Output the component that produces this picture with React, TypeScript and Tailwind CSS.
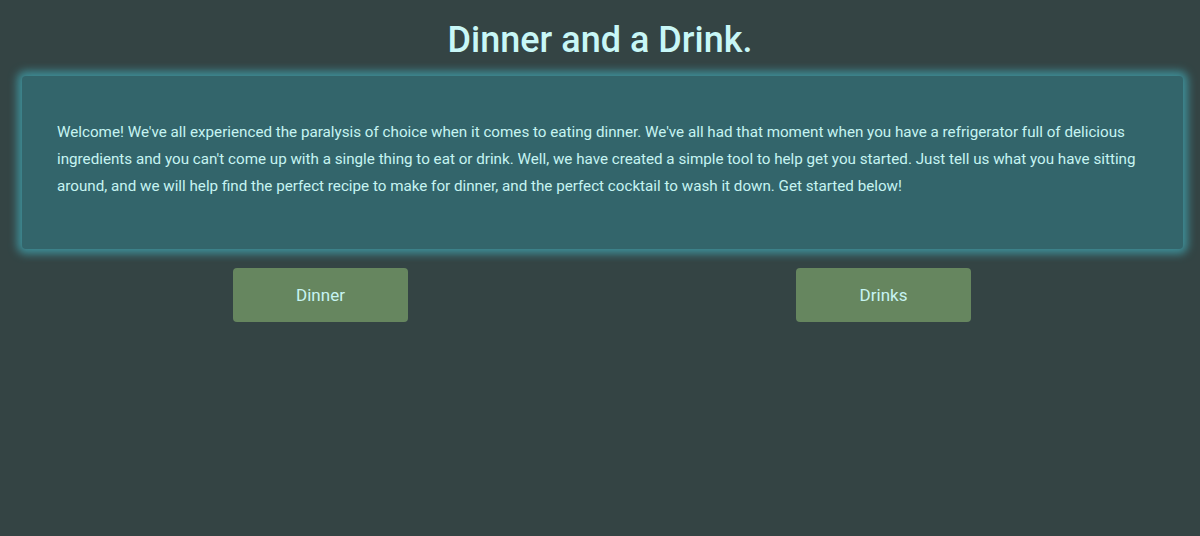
import React from 'react';

const intro =
  "Welcome! We've all experienced the paralysis of choice when it comes to eating dinner. We've all had that moment when you have a refrigerator full of delicious ingredients and you can't come up with a single thing to eat or drink. Well, we have created a simple tool to help get you started. Just tell us what you have sitting around, and we will help find the perfect recipe to make for dinner, and the perfect cocktail to wash it down. Get started below!";

const App: React.FC = () => {
  return (
    <div className="min-h-[536px] bg-[#344444] pt-[14px] font-['Roboto',sans-serif] text-[#c6f4f2]">
      <h1 className="text-center text-[36px] leading-[52px] font-medium text-[#c8f7f7]">
        Dinner and a Drink.
      </h1>

      {/* Intro card */}
      <div className="ml-[22px] mt-[10px] w-[1161px] rounded-[4px] bg-[#33656b] pl-[35px] pr-[30px] pt-[43px] pb-[49px] shadow-[0_0_8px_5px_#3e8c95]">
        <p className="text-[15.2px] leading-[27px]">{intro}</p>
      </div>

      {/* Buttons */}
      <div className="ml-[39px] mt-[19px] grid w-[1126px] grid-cols-2">
        <div className="flex justify-center">
          <button className="h-[54px] w-[175px] rounded-[4px] bg-[#66865f] pt-[2px] text-[17px] text-[#c6f4f2]">
            Dinner
          </button>
        </div>
        <div className="flex justify-center">
          <button className="h-[54px] w-[175px] rounded-[4px] bg-[#66865f] pt-[2px] text-[17px] text-[#c6f4f2]">
            Drinks
          </button>
        </div>
      </div>
    </div>
  );
};

export default App;
